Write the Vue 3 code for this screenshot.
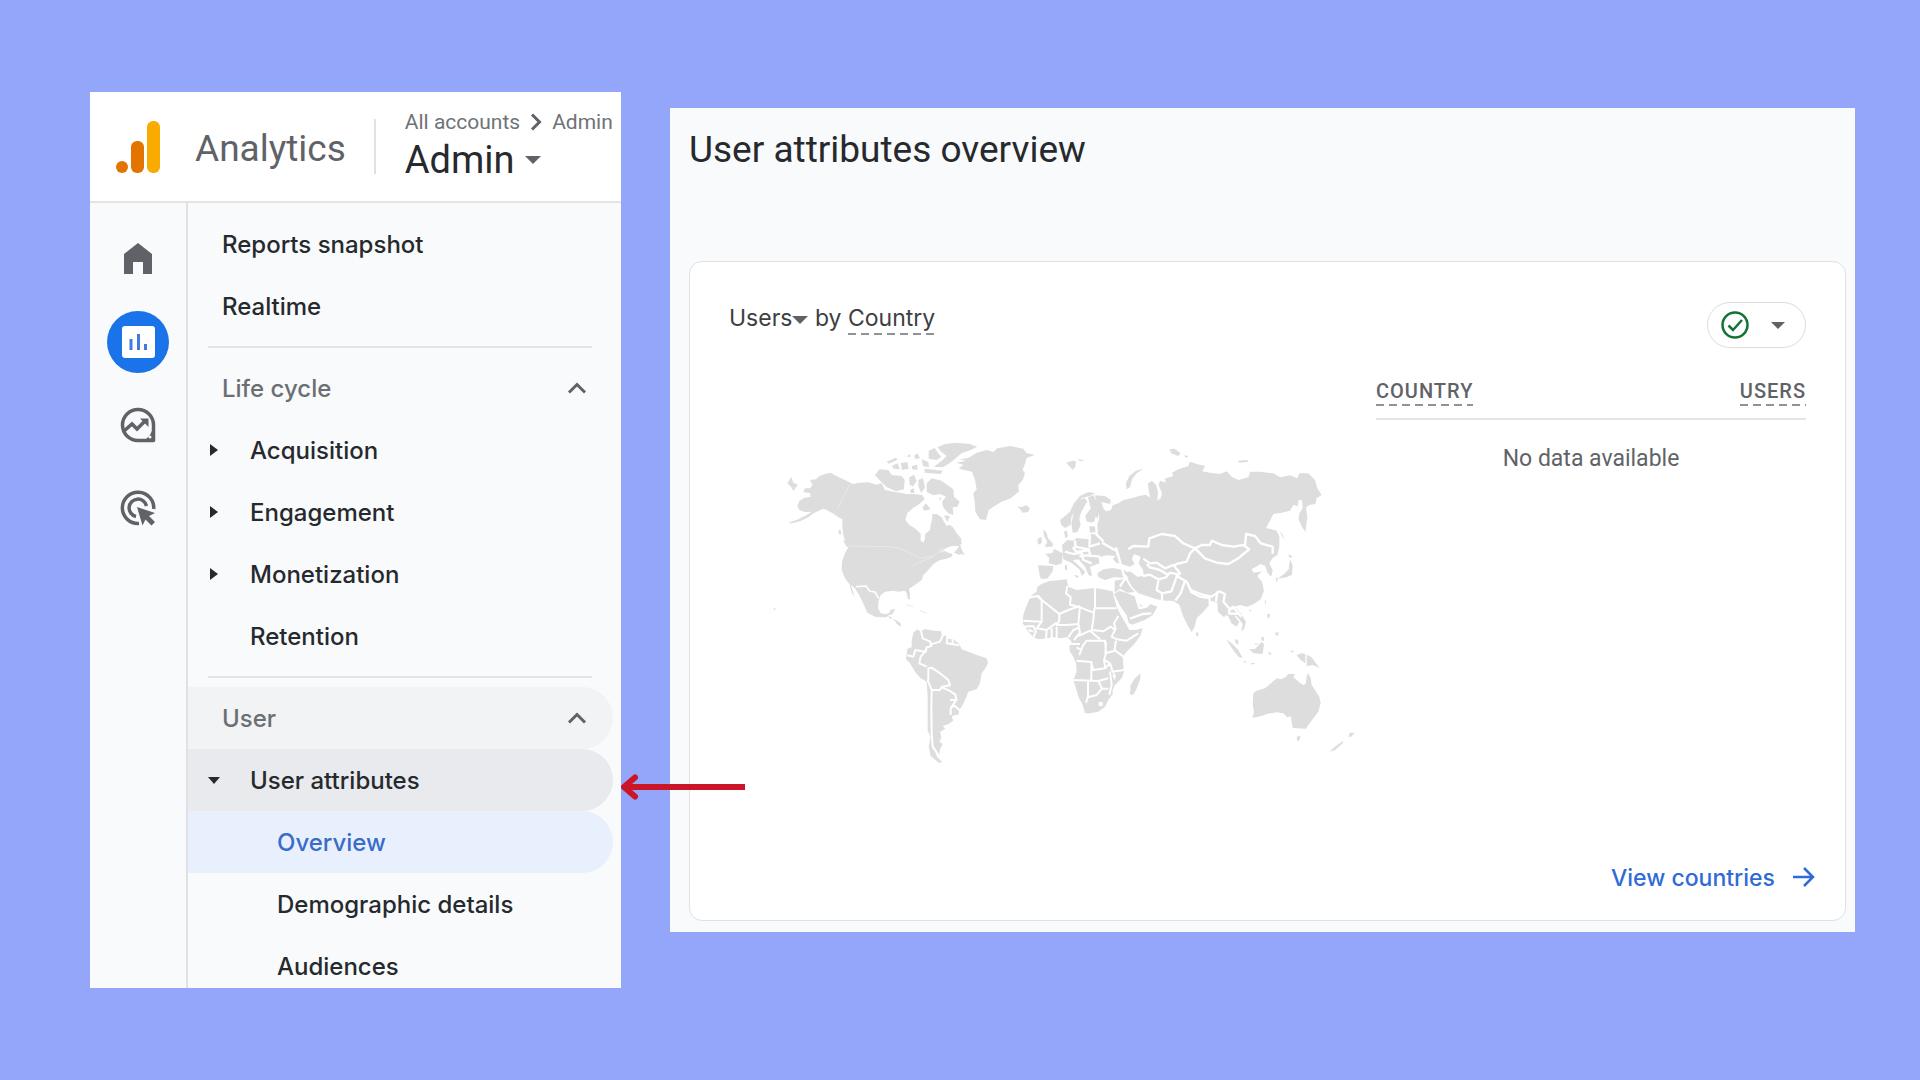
<script setup>
const topLinks = ['Reports snapshot', 'Realtime']
const lifeCycle = [
  { label: 'Acquisition', group: true },
  { label: 'Engagement', group: true },
  { label: 'Monetization', group: true },
  { label: 'Retention', group: false },
]
const columns = ['Country', 'Users']
</script>

<template>
  <main class="page">
    <section class="panel">
      <header class="topbar">
        <svg class="logo" viewBox="0 0 46 54" aria-hidden="true">
          <rect x="32" y="1" width="13" height="52" rx="6" fill="#f9ab00" />
          <rect x="16" y="21" width="13" height="32" rx="6" fill="#e37400" />
          <circle cx="7" cy="47" r="6" fill="#e37400" />
        </svg>
        <span class="brand">Analytics</span>
        <div class="account">
          <div class="crumbs">
            <a href="#">All accounts</a>
            <svg viewBox="0 0 12 18" aria-hidden="true"><path d="M2 1.500l7.500 7.500L2 16.500" fill="none" stroke="#5f6368" stroke-width="3" /></svg>
            <a href="#">Admin</a>
          </div>
          <button class="switcher" type="button">Admin<span class="caret"></span></button>
        </div>
      </header>

      <div class="body">
        <nav class="rail" aria-label="Main">
          <a href="#" aria-label="Home">
            <svg viewBox="0 0 36 36"><path d="M18 2L4 13v20h9V21h10v12h9V13z" fill="#5f6368" /></svg>
          </a>
          <a href="#" class="current" aria-label="Reports">
            <svg viewBox="0 0 36 36">
              <rect x="2" y="2" width="33" height="32" rx="3" fill="#fff" />
              <path d="M11 15v11M18.500 10v16M25.500 20v6" stroke="#3f7be0" stroke-width="3" />
            </svg>
          </a>
          <a href="#" aria-label="Explore">
            <svg viewBox="0 0 36 36" fill="none" stroke="#5f6368">
              <path d="M18 2.500a15.500 15.500 0 1 0 0 31h15.500V18A15.500 15.500 0 0 0 18 2.500z" stroke-width="3.500" stroke-linejoin="round" />
              <path d="M33 21v13H21c6-1 10-6 12-13z" fill="#5f6368" stroke="none" />
              <circle cx="30" cy="30" r="1.500" fill="#fff" stroke="none" />
              <path d="M4 24l8-7 5 5 8-8" stroke-width="3.500" />
              <path d="M20 11.500h8.500V20z" fill="#5f6368" stroke="none" />
            </svg>
          </a>
          <a href="#" aria-label="Advertising">
            <svg viewBox="0 0 36 36" fill="none" stroke="#5f6368" stroke-width="3.500">
              <path d="M19 33.500A15.700 15.700 0 1 1 33.700 19" />
              <path d="M16 26.500A8.800 8.800 0 1 1 26.500 16" />
              <path d="M17 17l18 6-6 3 6 6-3.500 3.500-6-6-3 6z" fill="#5f6368" stroke="none" />
            </svg>
          </a>
        </nav>

        <nav class="menu" aria-label="Reports">
          <ul>
            <li v-for="label in topLinks" :key="label"><a href="#" class="row">{{ label }}</a></li>
          </ul>
          <hr />
          <ul>
            <li>
              <button type="button" class="row heading">
                Life cycle
                <svg class="chevron" viewBox="0 0 20 12" aria-hidden="true"><path d="M2 10.500l8-8 8 8" fill="none" stroke="#5f6368" stroke-width="3" /></svg>
              </button>
            </li>
            <li v-for="item in lifeCycle" :key="item.label">
              <button v-if="item.group" type="button" class="row child"><span class="twist"></span>{{ item.label }}</button>
              <a v-else href="#" class="row child"><span class="twist none"></span>{{ item.label }}</a>
            </li>
          </ul>
          <hr />
          <ul class="last">
            <li>
              <button type="button" class="row heading open">
                User
                <svg class="chevron" viewBox="0 0 20 12" aria-hidden="true"><path d="M2 10.500l8-8 8 8" fill="none" stroke="#5f6368" stroke-width="3" /></svg>
              </button>
            </li>
            <li class="pointed">
              <button type="button" class="row child hovered"><span class="twist down"></span>User attributes</button>
              <svg class="pointer" viewBox="0 0 124 28" aria-hidden="true">
                <path d="M124 14H4" stroke="#cb1528" stroke-width="6" />
                <path d="M14 4.500L3 14l11 9.500" fill="none" stroke="#cb1528" stroke-width="6" stroke-linecap="round" stroke-linejoin="round" />
              </svg>
            </li>
            <li><a href="#" class="row leaf selected">Overview</a></li>
            <li><a href="#" class="row leaf">Demographic details</a></li>
            <li><a href="#" class="row leaf">Audiences</a></li>
          </ul>
        </nav>
      </div>
    </section>

    <section class="report">
      <h1>User attributes overview</h1>
      <article class="card">
        <header class="card-head">
          <h2>
            <button type="button" class="metric">Users<span class="caret"></span></button>
            by <span class="dashed">Country</span>
          </h2>
          <button type="button" class="status" aria-label="Data quality">
            <svg viewBox="0 0 28 28" fill="none" stroke="#137333">
              <circle cx="14" cy="14" r="12.500" stroke-width="2.500" />
              <path d="M7.500 14.500l4.500 4.500 9-10" stroke-width="2.500" />
            </svg>
            <span class="caret small"></span>
          </button>
        </header>

        <div class="card-body">
          <svg class="map" viewBox="0 0 1800 1050" role="img" aria-label="World map">
            <!-- North America -->
            <g fill="#ddd">
              <path d="M150 150L168 148 178 138 195 132 212 128 225 136 250 148 278 162 300 158 325 157 350 164 365 160 375 180 400 185 420 188 440 192 465 192 488 196 494 208 478 222 458 235 442 250 436 270 448 285 462 293 474 303 482 312 482 332 490 338 495 325 495 312 510 300 512 285 516 268 517 252 530 252 545 262 552 275 560 288 568 284 578 290 590 310 603 325 605 342 595 348 575 348 555 356 535 370 552 362 565 368 578 372 575 380 560 386 540 390 520 402 505 420 490 435 485 450 465 465 447 476 450 495 450 508 444 508 440 490 435 482 415 485 400 482 375 485 362 495 356 512 354 535 362 550 378 553 388 548 392 540 406 536 398 552 385 556 380 562 362 562 345 560 322 548 312 525 300 500 285 475 268 462 255 445 245 420 246 395 255 370 266 350 256 335 250 315 247 290 247 268 235 262 218 250 200 240 190 236 175 243 160 250 145 262 120 274 88 281 90 277 115 268 140 255 155 245 135 246 118 240 112 228 118 213 132 204 152 200 150 190 130 186 135 175 150 175 158 165z" />
              <path d="M82 160l12-20 6 18 14 6-14 18-6-10zM235 302l6-4 3 14-6 2zM248 330l8 4 12 18-8-2zM582 368l10-12 8-14 4 14 10 20-10-4-8 2zM268 462l4 2 12 36-8-10zM42 534l5 2-3 5-4-2zM384 556l12 8-6 4zM398 566l10 4 12 8-6 4zM408 580l12-4 4 14-8-4z" />
              <path d="M345 136L358 118 385 120 395 135 425 138 434 150 432 178 408 184 380 172 366 158z" />
              <path d="M380 95l28-12 4 6-26 12zM395 108l18-8 6 18-18-2zM422 100l20-4 4 20-20 4zM440 80l10-8 2 8zM462 78l10-8 8 14-12 4zM455 108l16-4 2 16-16-2zM485 88l20 8 2 16-18-4zM448 142l14-8 8 20-12 16-10-8zM475 150l14-6 6 30-12 14-8-20zM494 116l54 6-6 10-48-4zM450 180l10-6 4 14-12 2z" />
              <path d="M500 160L515 145 545 152 562 165 580 178 582 200 599 215 592 230 578 232 580 255 565 250 550 232 546 215 558 200 540 192 520 196 500 186zM488 232l10-12 14 18-20 4zM552 256l18 2-8 18zM536 202l8 2-2 8z" />
              <path d="M506 62l18-8 12 18 8 8-14 10-24-4zM532 52L555 42 590 38 630 42 652 50 632 60 604 70 586 86 562 104 548 112 522 110 545 92 560 78 545 66z" />
              <path d="M588 98L618 92 598 88 625 84 650 68 680 60 700 66 712 55 750 48 790 56 800 70 825 74 800 84 796 98 788 120 795 130 788 150 775 165 776 185 752 205 725 215 700 230 686 240 678 270 660 268 646 245 644 215 640 190 650 178 645 150 636 125 596 116 610 104z" />
              <path d="M772 228l12 4 14-6 12 8-6 12-16 2-6-8zM766 176l12 4-6 10z" />
            </g>
            <g fill="none" stroke="#e9e9e9" stroke-width="3">
              <path d="M268 165L232 238M268 348L385 350 420 355 450 370 480 385 520 378 550 352M460 405L520 380M440 524l20 6M480 542l20 8" />
              <path d="M288 470L318 468 330 484 345 486 356 505" stroke="#fff" stroke-width="5" />
            </g>

            <!-- Europe and Asia -->
            <g transform="translate(750 0)">
              <g fill="#ddd">
                <path d="M255 196L285 198 303 210 300 222 274 216 280 235 288 244 303 240 308 226 325 220 340 210 365 205 390 197 408 194 420 203 416 180 414 160 426 153 438 165 444 185 442 212 452 205 456 190 446 165 450 152 468 158 464 146 490 138 486 128 505 118 535 108 540 95 560 102 586 108 576 124 600 128 630 132 650 124 665 140 685 150 715 142 720 125 750 125 790 130 810 142 840 136 862 145 868 130 895 130 915 150 922 175 935 195 920 205 916 222 900 224 888 232 892 262 886 306 876 290 866 270 868 250 878 235 876 210 866 210 864 228 850 225 840 242 815 248 790 252 780 272 768 294 785 298 800 302 808 320 808 350 802 375 788 384 778 400 788 420 784 440 772 428 766 408 752 402 738 410 724 418 732 428 756 424 742 438 756 456 762 482 752 508 732 522 712 530 690 525 680 534 692 550 708 575 702 598 694 604 698 582 682 560 672 556 688 576 680 590 664 580 656 560 648 555 642 562 624 545 622 518 606 512 598 524 580 545 560 565 554 590 545 606 535 590 520 560 508 524 496 516 486 512 465 512 440 508 410 498 385 490 366 470 352 445 345 430 360 424 382 440 402 438 398 418 386 400 392 380 372 372 366 388 374 402 360 410 335 402 318 398 308 386 322 372 318 358 296 348 276 330 262 312 258 290 268 266z" />
                <path d="M150 270L165 258 180 245 192 220 210 198 235 186 256 190 240 198 215 204 198 235 184 262 182 285 165 294 154 285zM188 308L184 280 192 245 204 216 222 203 232 214 214 245 208 265 212 285 202 306zM234 202L250 196 260 215 266 248 262 268 245 278 230 274 226 258 242 235z" />
                <path d="M156 345L172 330 190 332 200 324 236 328 244 312 268 314 280 335 318 358 318 378 290 376 266 382 268 400 240 410 246 438 236 436 226 412 206 388 188 390 205 406 226 426 216 438 208 418 184 398 160 388zM162 305l8-4 4 18-8 6zM238 288l18 2 4 16-20 2z" />
                <path d="M106 372L128 368 132 356 158 370 156 400 140 406 116 400 118 384zM84 406L130 408 128 424 112 446 92 446 88 430zM100 298L110 308 114 325 130 342 126 350 104 350 112 336 102 318zM82 328l12-8 2 18-12 6zM165 405l6 0 0 16-6-2zM192 435l14 2-4 8z" />
                <path d="M262 430L280 418 308 414 342 420 356 430 352 444 312 442 285 450 266 442zM314 452L345 446 360 470 374 486 352 488 330 476 314 488zM312 492L328 482 352 490 376 500 390 524 412 532 422 522 442 530 428 556 404 570 366 584 356 578 350 556 332 530z" />
                <path d="M350 178L348 160 358 138 378 122 400 116 380 130 366 148 360 172zM168 98l20-6 10 2-2 16-8 10-10-12zM202 88l24 2-16 4zM478 58l16-2 18 14-8 8-20-8zM522 76l14 2-8 6zM684 92l28-2 2 6-26 2zM808 300l10 14 8 18-12-18zM835 372l14 8-10 4zM840 388l8 18-2 28-16 8-28 4 20-14 14-14zM796 442l8 4-4 12zM764 510l4 2-2 12zM558 606l8 4-2 10-6-4zM716 540l8 0-2 6z" />
              </g>
              <g fill="none" stroke="#fff" stroke-width="7" stroke-linejoin="round">
                <path d="M355 358L370 348 415 350 418 325 455 312 495 318 520 340 555 355 575 345 600 345 605 332 635 345 670 350 700 345 718 358 700 372 685 385 655 402 620 398 585 385 555 355 540 370 530 395 500 402 490 408" />
                <path d="M705 348L708 312 735 318 752 340 788 350 788 372M400 386L420 400 440 398 465 415 490 405 510 430 500 438 530 455 542 480 580 495 605 500 628 484 645 492 640 515 660 538 690 528" />
                <path d="M398 438L420 434 445 448 468 442 480 428 505 434M410 402L420 412 450 420 476 436M445 452L440 480 456 490 456 514M456 490L484 484 500 440M524 455L512 490 496 512M540 484L570 500 598 504 600 525M622 484L618 515M655 545L668 530 682 545 694 560M654 550L690 552" />
                <path d="M240 318L238 350 270 340M195 332L196 350 236 358 242 382M188 352L200 366 240 360M165 365L190 372 212 368M258 262L260 314 280 334M276 338L318 362M318 352L345 448M208 378L232 376 270 380M215 368L220 390 245 400M352 445L340 432" />
                <path d="M345 446L330 470M378 500L388 534 410 530M424 550L398 552 360 566" />
              </g>
            </g>

            <!-- South America and Africa -->
            <g transform="translate(300 510)">
              <g fill="#ddd">
                <path d="M160 98L172 88 180 94 195 88 225 92 243 94 246 110 256 106 262 116 280 118 298 132 305 148 325 155 350 165 380 175 384 188 378 202 365 220 360 250 350 268 325 275 315 300 305 320 297 330 296 344 284 345 275 350 280 362 265 372 248 378 256 386 240 396 244 412 238 425 248 432 240 448 238 465 226 458 232 472 246 485 238 490 212 468 206 440 212 410 203 392 203 340 203 290 200 245 182 235 165 215 150 190 138 178 142 146 155 142 155 122z" />
                <path d="M532 -40L545 -48 565 -56 600 -60 620 -62 625 -40 650 -30 675 -33 705 -36 740 -30 758 -26 762 -8 770 20 782 45 797 70 808 90 828 90 848 84 842 105 825 130 800 155 788 170 790 195 792 215 785 235 765 255 758 270 758 282 745 300 735 320 715 335 690 340 675 340 668 315 655 290 648 265 640 240 650 215 648 190 640 170 630 155 628 140 635 125 622 112 600 115 580 112 560 115 535 118 520 112 505 95 488 70 490 45 497 25 505 5 515 -15 530 -25z" />
                <path d="M842 220L840 240 828 270 818 286 810 282 812 255 825 235z" />
              </g>
              <g fill="none" stroke="#fff" stroke-width="6" stroke-linejoin="round">
                <path d="M203 240L215 270 214 330 215 400 218 440 236 466M205 240V205L215 203 240 220 265 240 270 256 246 260 240 270H215M200 148L182 170 178 190 200 200M183 92L188 115 210 124 214 138 200 142 196 155M210 134L240 125 250 104M142 166L160 170 166 150 200 156M262 112L260 130 298 136M278 118V134M246 262L268 272 286 284 290 300 270 300M272 345V325L290 298M272 320L285 318 300 332" />
                <path d="M510 -8L535 -12 545 0 545 65 490 62M533 -10L598 42 625 30 660 18M622 -42L618 -20 632 -8 630 14 655 20 700 38M705 -38V25H770M703 25L700 60 695 90M598 42V62L590 75H620L655 72 660 18M655 72L660 98 642 120M655 108L690 92 720 118M695 90L730 94 752 80 765 90 755 110 770 118M768 90L762 70 775 48M770 118L800 122 835 100M768 122L764 150 790 170M738 125L736 160 765 152M628 132H660M658 165L668 138 680 122H735L738 160 732 180 736 205 700 210 694 186 650 182M650 142L664 150M694 186V240M640 240L715 243 745 235M735 205L750 190 758 215 792 210M734 180L750 190M750 215L755 255 748 284M684 245V290L678 308M684 292L710 285 726 266 745 266M715 243L726 266M490 80L520 78 528 95 520 112M545 65L530 85 560 90 590 68M560 90L558 116M575 85V115M590 80V115M625 112L640 90 655 84M505 90L520 95" />
              </g>
              <circle cx="722" cy="312" r="7" fill="#fff" />
              <path d="M760 215l8 12-4 14-6-12z" fill="#fff" />
            </g>

            <!-- Oceania -->
            <g transform="translate(1110 450)" fill="#ddd">
              <path d="M370 340L380 332 405 325 420 312 440 295 455 298 468 290 475 282 495 282 490 292 510 308 520 315 527 312 530 290 534 278 542 295 545 315 555 330 568 350 572 370 565 395 550 415 535 435 528 446 500 445 488 443 485 425 482 408 472 412 460 400 440 397 410 402 395 408 367 414 372 395 368 375z" />
              <path d="M500 470l12-2-4 12-6 4zM598 515L615 500 640 482 638 490 615 510zM655 470l5-12 14 0-10 12zM500 225L515 220 526 222V250L512 240zM530 224L545 232 555 246 569 264 550 256 530 258zM288 178L305 190 325 210 338 234 325 230 308 208zM314 178l10 2 2 14-8-4zM358 208L376 206 394 186 402 192 398 222 370 220zM372 192l14-2-8 6zM392 172l10 0 0 10-6 0zM338 242l14 4-8 2zM360 248l16 2-8 4zM414 216l12 4-8 6zM436 158l10-2-2 12-8-4zM412 102l8 0-2 14-6-4zM404 66l4 2-2 6zM480 212l12 0-4 6z" />
            </g>
          </svg>

          <table>
            <thead>
              <tr>
                <th v-for="name in columns" :key="name" scope="col"><span class="dashed">{{ name }}</span></th>
              </tr>
            </thead>
            <tbody>
              <tr><td colspan="2">No data available</td></tr>
            </tbody>
          </table>
        </div>

        <footer>
          <a href="#">View countries
            <svg viewBox="0 0 22 22" aria-hidden="true"><path d="M0 10h19M11 1l9 9-9 9" fill="none" stroke="#2f6bd8" stroke-width="2.500" /></svg>
          </a>
        </footer>
      </article>
    </section>
  </main>
</template>

<style>
body {
  margin: 0;
  background: #94a6f9;
}
</style>

<style scoped>
.page {
  box-sizing: border-box;
  min-height: 100vh;
  display: grid;
  grid-template-columns: 531fr 1185fr;
  gap: 49px;
  align-items: start;
  padding: 92px 65px 0 90px;
  color: #26292d;
  font-family: Inter, "Liberation Sans", sans-serif;
  font-size: 23px;
}
a {
  color: inherit;
  text-decoration: none;
}
button {
  padding: 0;
  border: 0;
  background: none;
  color: inherit;
  font: inherit;
  cursor: pointer;
}
ul {
  margin: 0;
  padding: 0;
  list-style: none;
}
.caret {
  display: inline-block;
  border: 8px solid transparent;
  border-top-color: #5f6368;
  border-bottom: 0;
}
.caret.small {
  border-width: 7px;
  border-bottom: 0;
}

/* Navigation panel */
.panel {
  background: #f8fafc;
}
.topbar {
  display: flex;
  align-items: center;
  height: 109px;
  padding-left: 25px;
  background: #fff;
  border-bottom: 2px solid #e2e4e6;
  font-family: Roboto, sans-serif;
}
.logo {
  width: 46px;
  height: 54px;
}
.brand {
  margin-left: 34px;
  padding-top: 4px;
  color: #5f6368;
  font-size: 37px;
}
.account {
  margin-left: 28px;
  padding: 1px 0 0 31px;
  background: linear-gradient(#dfe1e4, #dfe1e4) left center / 2px 55px no-repeat;
}
.crumbs {
  display: flex;
  align-items: center;
  gap: 10px;
  color: #6f7377;
  font-size: 21px;
  line-height: 26px;
}
.crumbs svg {
  width: 12px;
  height: 18px;
}
.switcher {
  display: flex;
  align-items: center;
  gap: 10px;
  font-size: 38px;
  line-height: 50px;
}
.body {
  display: flex;
}
.rail {
  display: flex;
  flex-direction: column;
  align-items: center;
  gap: 21px;
  width: 96px;
  padding-top: 25px;
  border-right: 2px solid #dfe1e4;
}
.rail a {
  display: grid;
  place-items: center;
  width: 62px;
  height: 62px;
  border-radius: 50%;
}
.rail svg {
  width: 36px;
  height: 36px;
}
.rail .current {
  background: #1a73e8;
}
.menu {
  flex: 1;
  padding-top: 10px;
  font-size: 24px;
  font-weight: 500;
}
.menu hr {
  height: 2px;
  margin: 9px 29px 9px 20px;
  border: 0;
  background: #e2e4e6;
}
.last {
  margin-bottom: -9px;
}
.row {
  box-sizing: border-box;
  display: flex;
  align-items: center;
  width: calc(100% - 8px);
  height: 62px;
  padding-left: 34px;
  border-radius: 0 31px 31px 0;
  text-align: left;
}
.heading {
  justify-content: space-between;
  padding-right: 26px;
  color: #6b6f73;
}
.open {
  background: #f1f3f4;
}
.hovered {
  background: #e8eaed;
}
.selected {
  background: #e8f0fe;
  color: #3a6cc8;
}
.chevron {
  width: 20px;
  height: 12px;
}
.child {
  padding-left: 22px;
}
.leaf {
  padding-left: 89px;
}
.twist {
  width: 0;
  margin-right: 32px;
  border: 6px solid transparent;
  border-left: 8px solid #26292d;
  border-right: 0;
}
.twist.none {
  border-left-color: transparent;
}
.twist.down {
  margin-left: -2px;
  margin-right: 30px;
  border: 6px solid transparent;
  border-top: 7px solid #26292d;
  border-bottom: 0;
}
.pointed {
  position: relative;
}
.pointer {
  position: absolute;
  left: 100%;
  top: 24px;
  width: 124px;
  height: 28px;
}

/* Report panel */
.report {
  margin-top: 16px;
  padding: 22px 9px 11px 19px;
  background: #f8fafc;
}
h1 {
  margin: 0 0 91px;
  font: 400 37px/40px Roboto, sans-serif;
}
.card {
  background: #fff;
  border: 1px solid #dfe2e5;
  border-radius: 13px;
}
.card-head {
  display: flex;
  justify-content: space-between;
  padding: 40px 39px 0;
}
h2 {
  margin: 0;
  color: #3c4043;
  font-size: 23px;
  font-weight: 400;
  line-height: 32px;
}
.metric .caret {
  margin-bottom: 2px;
}
.dashed {
  padding-bottom: 3px;
  background: repeating-linear-gradient(90deg, #8f9296 0 8px, transparent 8px 13px) left bottom / 100% 2px no-repeat;
}
.status {
  box-sizing: border-box;
  display: flex;
  align-items: center;
  justify-content: space-between;
  width: 99px;
  height: 46px;
  padding: 0 20px 0 13px;
  border: 1px solid #dadce0;
  border-radius: 23px;
}
.status svg {
  width: 28px;
  height: 28px;
}
.card-body {
  display: grid;
  grid-template-columns: 686fr 430fr;
  align-items: start;
  padding-right: 39px;
}
.map {
  justify-self: end;
  width: 600px;
  max-width: 100%;
  margin: 82px 16px 0 0;
}
table {
  width: 100%;
  margin-top: 28px;
  border-collapse: collapse;
  color: #5f6368;
  font-family: Roboto, sans-serif;
}
th {
  padding: 0 0 12px;
  border-bottom: 2px solid #e2e4e6;
  font-size: 20px;
  font-weight: 500;
  line-height: 30px;
  letter-spacing: 1px;
  text-align: left;
  text-transform: uppercase;
}
th:last-child {
  text-align: right;
}
td {
  padding-top: 23px;
  font-size: 23px;
  line-height: 32px;
  text-align: center;
}
footer {
  display: flex;
  justify-content: flex-end;
  padding: 82px 30px 26px;
  color: #2f6bd8;
  font-weight: 500;
}
footer a {
  display: flex;
  align-items: center;
  gap: 18px;
  line-height: 32px;
}
footer svg {
  width: 22px;
  height: 22px;
}
</style>
